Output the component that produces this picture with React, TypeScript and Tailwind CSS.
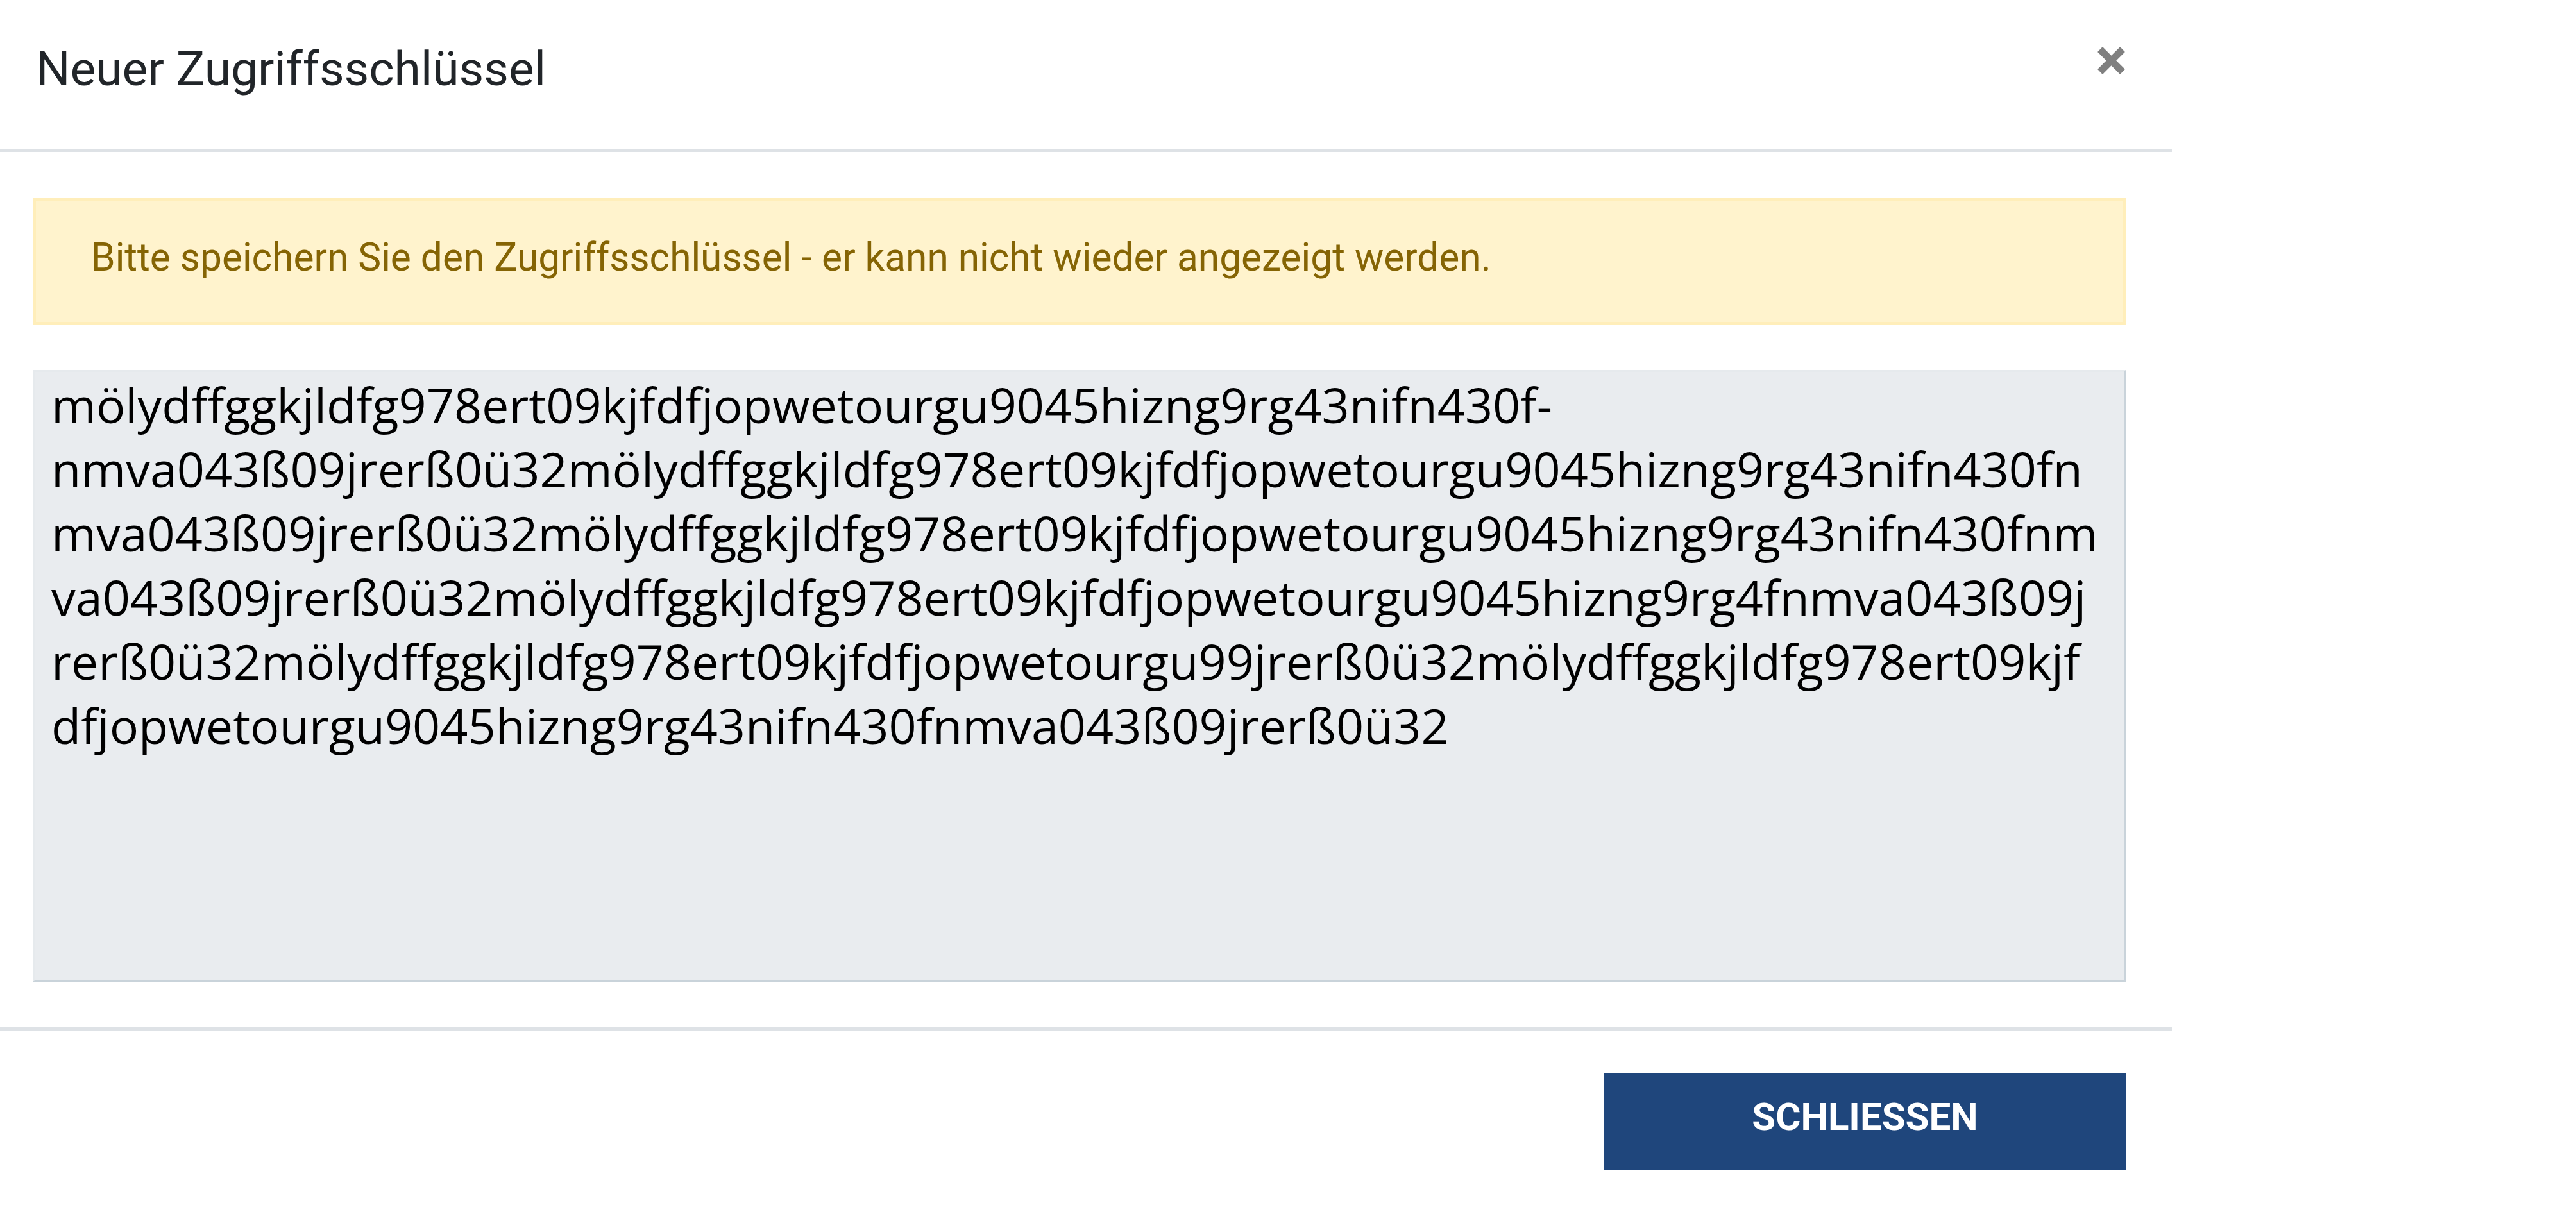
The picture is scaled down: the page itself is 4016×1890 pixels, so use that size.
import React from 'react';

const keyLines = [
  'mölydffggkjldfg978ert09kjfdfjopwetourgu9045hizng9rg43nifn430f-',
  'nmva043ß09jrerß0ü32mölydffggkjldfg978ert09kjfdfjopwetourgu9045hizng9rg43nifn430fn',
  'mva043ß09jrerß0ü32mölydffggkjldfg978ert09kjfdfjopwetourgu9045hizng9rg43nifn430fnm',
  'va043ß09jrerß0ü32mölydffggkjldfg978ert09kjfdfjopwetourgu9045hizng9rg4fnmva043ß09j',
  'rerß0ü32mölydffggkjldfg978ert09kjfdfjopwetourgu99jrerß0ü32mölydffggkjldfg978ert09kjf',
  'dfjopwetourgu9045hizng9rg43nifn430fnmva043ß09jrerß0ü32',
];

const App: React.FC = () => {
  return (
    <div className="min-h-[1890px] w-[4016px] bg-white">
      <div className="w-[3386px] bg-white font-['Roboto',sans-serif]">
        {/* Header */}
        <div className="flex h-[237px] items-start justify-between border-b-[5px] border-[#dee2e6] pl-[56px] pr-[71px] pt-[62px]">
          <h5 className="text-[75px] leading-[1.2] font-normal text-[#212529]">Neuer Zugriffsschlüssel</h5>
          <button type="button" aria-label="Close" className="mt-[9px] h-[47px] w-[47px]">
            <svg viewBox="0 0 47 47" className="h-[47px] w-[47px]">
              <path d="M6 6 L41 41 M41 6 L6 41" stroke="#808080" strokeWidth="11" />
            </svg>
          </button>
        </div>

        {/* Body */}
        <div className="pb-[71px] pl-[51px] pr-[72px] pt-[71px]">
          <div className="border-[5px] border-[#ffeeba] bg-[#fff3cd] pb-[54px] pl-[86px] pt-[44px] text-[60.4px] leading-[1.5] text-[#856404]">
            Bitte speichern Sie den Zugriffsschlüssel - er kann nicht wieder angezeigt werden.
          </div>

          <div className="mt-[70px] h-[954px] border-[3px] border-b-[#c9d3da] border-l-[#e6eaed] border-r-[#c9d3da] border-t-[#e6eaed] bg-[#e9ecef] pl-[26px] pt-[1px] font-['Open_Sans',sans-serif] text-[75.5px] leading-[100px] text-black">
            {keyLines.map((line) => (
              <div key={line} className="whitespace-nowrap">
                {line}
              </div>
            ))}
          </div>
        </div>

        {/* Footer */}
        <div className="flex justify-end border-t-[5px] border-[#dee2e6] pr-[71px] pt-[66px]">
          <button
            type="button"
            className="flex h-[151px] w-[815px] items-center justify-center bg-[#1f467c] pb-[12px] text-[60px] font-bold uppercase text-white"
          >
            Schliessen
          </button>
        </div>
      </div>
    </div>
  );
};

export default App;
